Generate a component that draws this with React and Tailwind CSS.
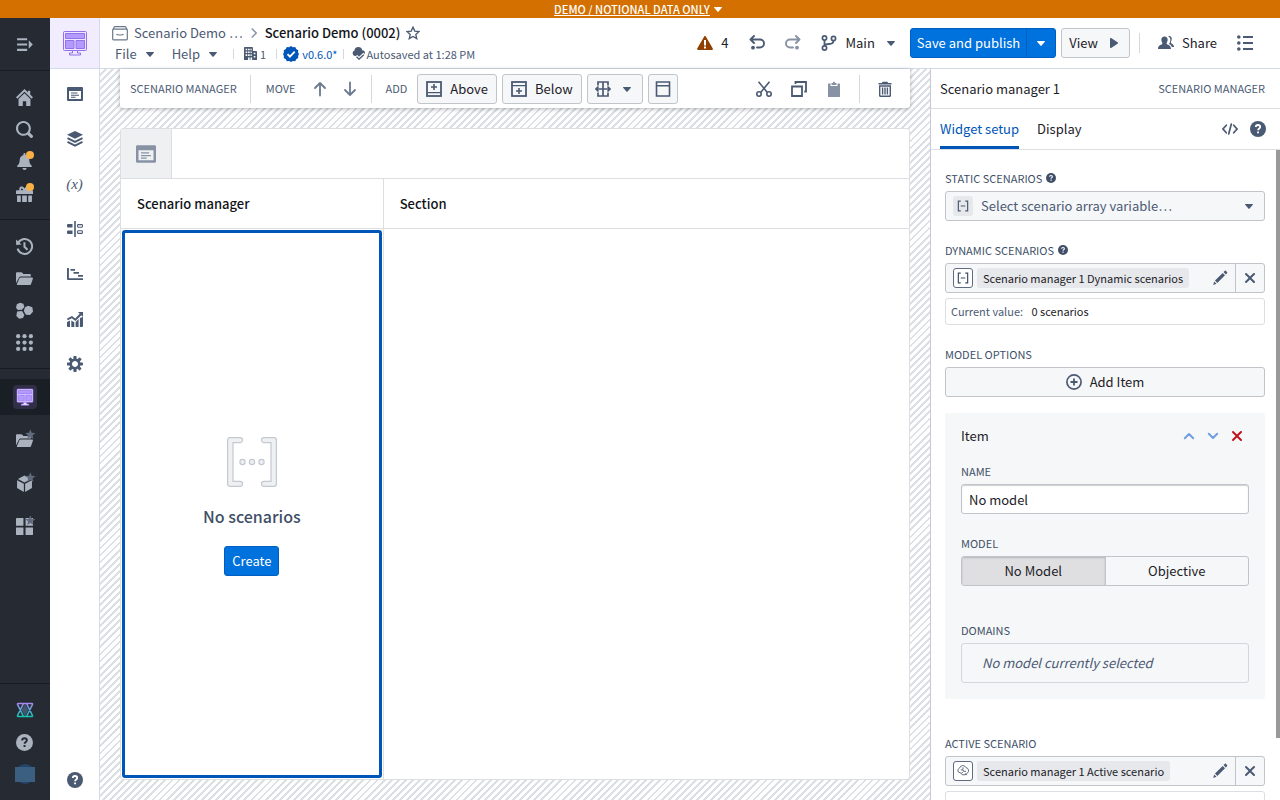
import React, { useState } from 'react';

const Icon = ({ size = 16, className = '', children }) => (
    <svg width={size} height={size} viewBox="0 0 16 16" fill="currentColor" className={`shrink-0 ${className}`} aria-hidden="true">
        {children}
    </svg>
);

const CaretDown = ({ className }) => (
    <Icon className={className}>
        <path d="M12 6.5c0-.28-.22-.5-.5-.5h-7a.495.495 0 00-.37.83l3.5 4c.09.1.22.17.37.17s.28-.07.37-.17l3.5-4c.08-.09.13-.2.13-.33z" />
    </Icon>
);

const Cross = ({ className }) => (
    <Icon className={className}>
        <path d="M9.41 8l3.29-3.29c.19-.18.3-.43.3-.71a1.003 1.003 0 00-1.71-.71L8 6.59l-3.29-3.3a1.003 1.003 0 00-1.42 1.42L6.59 8 3.3 11.29c-.19.18-.3.43-.3.71a1.003 1.003 0 001.71.71L8 9.41l3.29 3.29c.18.19.43.3.71.3a1.003 1.003 0 00.71-1.71L9.41 8z" />
    </Icon>
);

const Help = ({ size, className, mark = '#fff' }) => (
    <Icon size={size} className={className}>
        <circle cx="8" cy="8" r="8" />
        <path d="M5.8 6.1C5.8 4.8 6.7 4 8 4s2.2.8 2.2 1.9c0 1.5-2.1 1.7-2.1 3.3" fill="none" stroke={mark} strokeWidth="1.8" />
        <rect x="7.1" y="10.4" width="1.9" height="1.9" rx=".3" fill={mark} />
    </Icon>
);

const Menu = () => (
    <Icon size={17}>
        <path d="M1 2h9.5v2H1zM1 7h9.5v2H1zM1 12h9.5v2H1zM12 4l3.8 4L12 12z" />
    </Icon>
);

const Home = () => (
    <Icon size={17}>
        <path d="M8 0l3.2 3.1V1.6h2.2v3.6L16 7.8l-1.3 1.3L8 2.5 1.3 9.1 0 7.8z" />
        <path d="M8 4l5.6 5.5V16H9.6v-4.4H6.4V16h-4V9.5z" />
    </Icon>
);

const Search = () => (
    <Icon size={17}>
        <path d="M15.55 13.43l-2.67-2.68a6.94 6.94 0 001.11-3.76c0-3.87-3.13-7-7-7s-7 3.13-7 7 3.13 7 7 7c1.39 0 2.68-.42 3.76-1.11l2.68 2.67a1.498 1.498 0 102.12-2.12zm-8.56-1.44c-2.76 0-5-2.24-5-5s2.24-5 5-5 5 2.24 5 5-2.24 5-5 5z" />
    </Icon>
);

const Bell = () => (
    <Icon size={17}>
        <path d="M8 16a2 2 0 002-1.9H6A2 2 0 008 16zM13.4 10.3c-.7-1.2-.8-2.5-.9-4C12.3 4 11 2.3 9 1.800V1a1 1 0 00-2 0v.8C5 2.300 3.700 4 3.500 6.300c-.1 1.500-.2 2.800-.9 4-.6.9-1.600 1.500-1.600 2.200 0 .5.4.7.8.7h12.400c.4 0 .8-.2.8-.7 0-.7-1-1.300-1.600-2.200z" />
    </Icon>
);

const Gift = () => (
    <Icon size={17}>
        <path d="M1 5h2.500C2.300 3 4 .8 6 1.500c.9.300 1.500 1 2 1.900.5-.9 1.100-1.600 2-1.900 2-.7 3.700 1.500 2.500 3.500H15c.6 0 1 .4 1 1v2.500H0V6c0-.6.4-1 1-1zm4.200 0h1.600C6.400 4 5.800 3.200 5.200 3.300c-.7.200-.7 1.200 0 1.700z" />
        <path d="M1 9.800h3.500V16H1.800a.8.8 0 01-.8-.8zM5.800 9.800h4.400V16H5.800zM11.500 9.800H15v5.400c0 .4-.4.8-.8.8h-2.700z" />
    </Icon>
);

const History = () => (
    <Icon size={17}>
        <path d="M2.300 4.200A7 7 0 111.500 10" fill="none" stroke="currentColor" strokeWidth="1.900" />
        <path d="M0 1.500l.2 5 5-.3zM7 4h1.900v3.800l2.600 2.600-1.300 1.300L7 8.600z" />
    </Icon>
);

const FolderOpen = () => (
    <Icon size={17}>
        <path d="M0 3.200c0-.7.4-1.200 1.100-1.200h3.800c.4 0 .7.200 1 .5L7 3.700h5.800c.7 0 1.200.5 1.200 1.200V6H4.300c-.6 0-1 .3-1.300.8L0 12.500z" />
        <path d="M4.400 7H15c.8 0 1.100.6.9 1.200l-1.700 4.900c-.2.600-.6.900-1.200.9H1.500c-.6 0-.8-.4-.6-.9l2.300-5.300c.2-.5.6-.8 1.200-.8z" />
    </Icon>
);

const Hexagons = () => (
    <Icon size={17}>
        <path d="M3.700.8l3.200.8 1 3.100-2.300 2.500-3.900.4L0 5.500l.8-3.300zM11.400 3.500l4 1.400.6 4.200-2.800 3.200-3.900-.4-2-3.500 1.200-3.400zM1 9l4.700-.6 2.200 3.800-1.300 2.900-3.700.6L.3 13.200z" />
    </Icon>
);

const GridDots = () => (
    <Icon size={17}>
        {[2, 8, 14].map((y) => [2, 8, 14].map((x) => <circle key={`${x}-${y}`} cx={x} cy={y} r="2" />))}
    </Icon>
);

const StarBadge = () => (
    <path d="M13.500 -2.500L14.800 .7L18.300 1L15.600 3.200L16.400 6.500L13.500 4.700L10.600 6.500L11.400 3.200L8.700 1L12.200 .7z" fill="#5f6b7c" />
);

const FolderStar = () => (
    <Icon size={17} className="overflow-visible">
        <path d="M0 3.200c0-.7.4-1.200 1.100-1.200h3.800c.4 0 .7.200 1 .5L7 3.700h5.800c.7 0 1.200.5 1.200 1.200V6H4.300c-.6 0-1 .3-1.300.8L0 12.500z" />
        <path d="M4.400 7H15c.8 0 1.100.6.9 1.200l-1.700 4.900c-.2.600-.6.900-1.200.9H1.500c-.6 0-.8-.4-.6-.9l2.300-5.300c.2-.5.6-.8 1.200-.8z" />
        <StarBadge />
    </Icon>
);

const CubeStar = () => (
    <Icon size={17} className="overflow-visible">
        <path d="M8 .5l6.200 3.200L8 7 1.800 3.700zM1 5l6.400 3.300V16L1 12.300zM15 5L8.600 8.300V16L15 12.300z" />
        <StarBadge />
    </Icon>
);

const AppsStar = () => (
    <Icon size={17} className="overflow-visible">
        <path d="M.8 0H7v7.200H0V.8A.8.8 0 01.8 0zM9 0h7v7.200H9zM0 9h7v7H.8a.8.8 0 01-.8-.8zM9 9h7v6.200a.8.8 0 01-.8.8H9z" />
        <StarBadge />
    </Icon>
);

const WorkshopLogo = ({ size = 26 }) => (
    <svg width={size} height={size} viewBox="0 0 26 26" fill="none" stroke="#9470ea" aria-hidden="true">
        <rect x="1.500" y="1.500" width="23" height="19" rx="1" fill="#ede6ff" />
        <path d="M3.500 3.500h19v5h-19zM3.500 10.500h8.500v8H3.500zM14 10.500h8.500v8H14z" fill="#b49aff" />
        <path d="M10.500 20.500h5v2.500h3v2h-11v-2h3z" fill="#ede6ff" />
    </svg>
);

const WindowLines = ({ size, className }) => (
    <Icon size={size} className={className}>
        <path d="M15 1H1a1 1 0 00-1 1v12a1 1 0 001 1h14a1 1 0 001-1V2a1 1 0 00-1-1zm-1 12H2V5h12zM4 6.500h6.500v1H4zM4 8.700h8v1H4zM4 10.800h4.500v1H4z" fillRule="evenodd" />
    </Icon>
);

const Layers = () => (
    <Icon>
        <path d="M8 0l8 3.800-8 4-8-4z" />
        <path d="M.5 7.200L8 10.900l7.500-3.700M.5 10.900L8 14.600l7.500-3.700" fill="none" stroke="currentColor" strokeWidth="1.900" />
    </Icon>
);

const Alignment = () => (
    <Icon>
        <path d="M7.200 0h1.600v16H7.200zM1 3h4.500v3.500H1a1 1 0 01-1-1V4a1 1 0 011-1zM1 9.500h4.500V13H1a1 1 0 01-1-1v-1.500a1 1 0 011-1z" />
        <rect x="10.600" y="3.600" width="4.800" height="2.600" rx=".6" fill="none" stroke="currentColor" strokeWidth="1.100" />
        <rect x="10.600" y="9.800" width="4.800" height="2.600" rx=".6" fill="none" stroke="currentColor" strokeWidth="1.100" />
    </Icon>
);

const Gantt = () => (
    <Icon>
        <path d="M0 2h1.900v10.200H16V14H1a1 1 0 01-1-1zM3.500 3H8v1.700H3.500zM6.500 6H12v1.700H6.500zM11 9h5v1.700h-5z" />
    </Icon>
);

const Trend = () => (
    <Icon>
        <path d="M0 11l3-1.600V16H1a1 1 0 01-1-1zM4.300 9.500l3 1.800V16h-3zM8.600 11l3-3v8h-3zM12.900 7L16 6v9a1 1 0 01-1 1h-2.100zM11 1h5v5l-1.700-1.700-5.900 5.600-3.600-2.600-4.100 2L0 7.600 5 5l3.200 2.400 4.500-4.700z" />
    </Icon>
);

const Cog = () => (
    <Icon>
        <path d="M15.190 6.390h-1.850c-.11-.37-.27-.71-.45-1.040l1.360-1.360c.31-.31.31-.82 0-1.130l-1.130-1.130a.803.803 0 00-1.130 0l-1.360 1.360c-.33-.17-.67-.33-1.040-.44V.79c0-.44-.36-.8-.8-.8h-1.600c-.44 0-.8.36-.8.8v1.860c-.39.12-.75.28-1.100.47l-1.300-1.300c-.3-.3-.79-.3-1.090 0L1.820 2.910c-.3.3-.3.79 0 1.090l1.300 1.300c-.2.34-.36.7-.48 1.090H.79c-.44 0-.8.36-.8.8v1.600c0 .44.36.8.8.8h1.850c.11.37.27.71.45 1.040l-1.360 1.360c-.31.31-.31.82 0 1.130l1.130 1.130c.31.31.82.31 1.130 0l1.360-1.360c.33.18.67.33 1.040.44v1.860c0 .44.36.8.8.8h1.600c.44 0 .8-.36.8-.8v-1.860c.39-.12.75-.28 1.100-.47l1.300 1.300c.3.3.79.3 1.090 0l1.090-1.090c.3-.3.3-.79 0-1.090l-1.300-1.300c.19-.35.36-.71.48-1.100h1.850c.44 0 .8-.36.8-.8v-1.600a.816.816 0 00-.81-.79zm-7.200 4.600c-1.660 0-3-1.340-3-3s1.340-3 3-3 3 1.340 3 3-1.340 3-3 3z" />
    </Icon>
);

const Project = () => (
    <Icon className="text-[#6b778a]">
        <path d="M2.500 1.600h11M1.500 4.200h13a.8.8 0 01.8.8v9a.8.8 0 01-.8.8h-13A.8.8 0 01.7 14V5a.8.8 0 01.8-.8zM4.500 9c.5 1.300 6.500 1.300 7 0M1 4.500l1.500-3M15 4.500l-1.500-3" fill="none" stroke="currentColor" strokeWidth="1.200" />
    </Icon>
);

const Star = () => (
    <Icon size={14}>
        <path d="M8 1.300l2 4.500 4.900.5-3.700 3.300 1.100 4.900L8 12l-4.300 2.500 1.100-4.900L1.100 6.300 6 5.800z" fill="none" stroke="currentColor" strokeWidth="1.500" />
    </Icon>
);

const Building = () => (
    <Icon size={13}>
        <path d="M0 1a1 1 0 011-1h9a1 1 0 011 1v4h4a1 1 0 011 1v10h-6v-3H8v3H7v-3H5v3H0zm2 1v2h2V2zm3 0v2h2V2zm3 0v2h1.500V2zM2 5.500v2h2v-2zm3 0v2h2v-2zm3 0v2h1.500v-2zM2 9v2h2V9zm3 0v2h2V9zm3 0v2h1.500V9zm4-2v2h2V7zm0 4v2h2v-2z" fillRule="evenodd" />
    </Icon>
);

const Verified = () => (
    <Icon className="text-[#0055b8]">
        <path d="M8 0l1.900 1.200 2.300-.1 1 2 2 1.100-.1 2.300L16 8l-.9 1.900.1 2.200-2 1.100-1 2-2.300-.1L8 16l-1.900-.9-2.300.1-1-2-2-1.100.1-2.200L0 8l.9-1.500-.1-2.300 2-1.100 1-2 2.300.1z" />
        <path d="M4.500 8.200l2.400 2.400 4.800-4.900" fill="none" stroke="#fff" strokeWidth="1.900" />
    </Icon>
);

const CloudTick = () => (
    <Icon size={13}>
        <path d="M3.600 11A3.500 3.500 0 013 4.300 4.800 4.800 0 0112.500 4 3.600 3.600 0 0116 7.600l-.3 1-1.700-1.500-5.300 5L6.500 9.800 4.500 11z" />
        <path d="M5.500 12l3.200 3 5.800-5.500" fill="none" stroke="currentColor" strokeWidth="1.600" />
    </Icon>
);

const Warning = () => (
    <Icon className="text-[#8f4000]">
        <path d="M15.800 13.500l-7-12.100a.95.95 0 00-1.600 0L.2 13.500c-.4.7 0 1.500.8 1.500h14c.8 0 1.200-.8.8-1.500zM7 5h2v5.500H7zm0 6.500h2v2H7z" fillRule="evenodd" />
    </Icon>
);

const Undo = () => (
    <Icon>
        <path d="M1.500 4.500H11a4 4 0 010 8H8M5 1L1.500 4.500 5 8" fill="none" stroke="currentColor" strokeWidth="1.900" strokeLinecap="round" strokeLinejoin="round" />
        <circle cx="4" cy="12.700" r="1.900" />
    </Icon>
);

const Branch = () => (
    <Icon>
        <path d="M3.500 5v6M12.500 5.500c0 3-2 3.500-4.500 3.500-2.400 0-4.200.6-4.500 2" fill="none" stroke="currentColor" strokeWidth="1.800" />
        <circle cx="3.500" cy="3" r="2.100" fill="none" stroke="currentColor" strokeWidth="1.700" />
        <circle cx="12.500" cy="3.500" r="2.100" fill="none" stroke="currentColor" strokeWidth="1.700" />
        <circle cx="3.500" cy="13" r="2.100" fill="none" stroke="currentColor" strokeWidth="1.700" />
    </Icon>
);

const Play = () => (
    <Icon>
        <path d="M12 8c0-.35-.19-.64-.46-.82l.01-.02-6-4-.01.02A.969.969 0 005 3c-.55 0-1 .45-1 1v8c0 .55.45 1 1 1 .21 0 .39-.08.54-.18l.01.02 6-4-.01-.02c.27-.18.46-.47.46-.82z" />
    </Icon>
);

const People = () => (
    <Icon>
        <path d="M10 1.200c2.200-.7 3.900.6 3.700 2.900 0 .8-.2 1.500-.6 2.100-.4.8-.3 1.800.4 2.200 1.200.7 2.500 1.400 2.500 3.600h-2.200c-.5-1.600-1.600-2.300-2.800-2.900.9-1.100 1.500-3.200 1.300-5-.1-1.300-.9-2.400-2.300-2.900z" />
        <path d="M6.500 1.400c2 0 3.200 1.300 3.200 3.200 0 1-.3 2-.8 2.800-.5.9-.3 1.700.6 2.100 1.800.8 3.400 1.400 3.500 4.500H0c.1-3.100 1.700-3.700 3.500-4.500.9-.4 1.100-1.200.6-2.100-.5-.8-.8-1.800-.8-2.800 0-1.900 1.200-3.200 3.200-3.200z" />
    </Icon>
);

const List = () => (
    <Icon>
        <circle cx="1.800" cy="2" r="1.800" />
        <circle cx="1.800" cy="8" r="1.800" />
        <circle cx="1.800" cy="14" r="1.800" />
        <path d="M6 1.100h10v1.800H6zM6 7.100h10v1.800H6zM6 13.100h10v1.800H6z" />
    </Icon>
);

const Arrow = ({ down }) => (
    <Icon className={down ? 'rotate-180' : ''}>
        <path d="M8 14.500V2M3 7l5-5 5 5" fill="none" stroke="currentColor" strokeWidth="1.800" strokeLinecap="round" strokeLinejoin="round" />
    </Icon>
);

const AddRow = ({ below }) => (
    <Icon>
        <rect x="1" y="1" width="14" height="14" fill="none" stroke="currentColor" strokeWidth="1.800" />
        {below ? <path d="M1 4h14v1.300H1zM7.200 7h1.600v2.200H11v1.600H8.800V13H7.200v-2.200H5V9.200h2.200z" /> : <path d="M1 11h14v1.300H1zM7.200 3h1.600v2.200H11v1.600H8.800V9H7.200V6.800H5V5.200h2.200z" />}
    </Icon>
);

const SplitColumns = () => (
    <Icon>
        <path d="M3 4.500V1h10v3.500M3 11.500V15h10v-3.500M8 1v14M1 8h14M3.500 5.500L1 8l2.500 2.500M12.500 5.500L15 8l-2.500 2.500" fill="none" stroke="currentColor" strokeWidth="1.700" />
    </Icon>
);

const Panel = () => (
    <Icon>
        <path d="M1.500 1h13v14h-13zM1.500 4.700h13" fill="none" stroke="currentColor" strokeWidth="1.600" />
    </Icon>
);

const Cut = () => (
    <Icon>
        <path d="M2.500.8l8.700 10.400M13.500.8L4.800 11.200" fill="none" stroke="currentColor" strokeWidth="1.600" />
        <circle cx="3" cy="13" r="2.200" fill="none" stroke="currentColor" strokeWidth="1.600" />
        <circle cx="13" cy="13" r="2.200" fill="none" stroke="currentColor" strokeWidth="1.600" />
    </Icon>
);

const Duplicate = () => (
    <Icon>
        <path d="M1 5.500h10V15H1zM4.500 3V1H15v9.500h-1.700" fill="none" stroke="currentColor" strokeWidth="1.800" />
    </Icon>
);

const Clipboard = () => (
    <Icon className="text-[#8792a5]">
        <path d="M2.500 2.500h2V5h7V2.500h2c.3 0 .5.2.5.5v12.500c0 .3-.2.5-.5.5h-11a.5.5 0 01-.5-.5V3c0-.3.2-.5.5-.5zM5.500 2h1.300a1.200 1.200 0 012.400 0h1.300v2h-5z" />
    </Icon>
);

const Trash = () => (
    <Icon>
        <path d="M1.500 2H5c0-.6.5-1.200 1.200-1.200h3.600c.7 0 1.200.6 1.200 1.200h3.500v1.500h-13z" />
        <path d="M2.700 5h10.600v9.500a.8.8 0 01-.8.8h-9a.8.8 0 01-.8-.8zM5.600 6.500v7M8 6.500v7M10.400 6.500v7" fill="none" stroke="currentColor" strokeWidth="1.400" />
    </Icon>
);

const Code = () => (
    <Icon>
        <path d="M4.300 4.200L1 8l3.300 3.800M11.700 4.200L15 8l-3.300 3.800M9.300 3L6.700 13" fill="none" stroke="currentColor" strokeWidth="1.700" strokeLinecap="round" />
    </Icon>
);

const Edit = () => (
    <Icon>
        <path d="M1.200 14.900l1-3.500 2.300 2.300zM3 10.600l7.700-7.700 2.300 2.300-7.700 7.700zM11.500 2.100l1.200-1.200c.5-.5 1-.3 1.300 0l1 1c.4.4.4.9 0 1.300l-1.200 1.200z" />
    </Icon>
);

const AddCircle = () => (
    <Icon>
        <circle cx="8" cy="8" r="7.100" fill="none" stroke="currentColor" strokeWidth="1.700" />
        <path d="M7.100 4.500h1.800v2.600h2.600v1.800H8.900v2.600H7.100V8.900H4.500V7.100h2.600z" />
    </Icon>
);

const Chevron = ({ down }) => (
    <Icon className={down ? 'rotate-180' : ''}>
        <path d="M3.800 10.200L8 6l4.200 4.200" fill="none" stroke="currentColor" strokeWidth="2" strokeLinecap="round" strokeLinejoin="round" />
    </Icon>
);

const ArrayIcon = () => (
    <Icon size={12}>
        <path d="M5 1.500H1.800v13H5M11 1.500h3.200v13H11M5 8h6" fill="none" stroke="currentColor" strokeWidth="1.600" />
    </Icon>
);

const ScenarioIcon = () => (
    <Icon size={12}>
        <path d="M2 9.500A3.500 3.500 0 013.500 4 4.500 4.500 0 0112 3.500a4 4 0 012 7L11.500 13H7l-2-2.500zM5 6.500h3l1 2h3M8 3v3M6 11l2-2M11 11l2 2.500" fill="none" stroke="currentColor" strokeWidth="1.100" />
    </Icon>
);

const EmptyArray = () => (
    <svg width="50" height="50" viewBox="1 1 50 50" fill="#eff0f2" stroke="#c3c8d1" strokeWidth="1.200" aria-hidden="true">
        <path d="M4 1.600h10a2.500 2.500 0 010 5H7v38.800h7a2.500 2.500 0 010 5H4A2.400 2.400 0 011.600 48V4A2.400 2.400 0 014 1.600z" />
        <path d="M48 1.600H38a2.500 2.500 0 000 5h7v38.800h-7a2.500 2.500 0 000 5h10a2.400 2.400 0 002.400-2.400V4A2.400 2.400 0 0048 1.600z" />
        <circle cx="16.500" cy="26" r="2.600" />
        <circle cx="26" cy="26" r="2.600" />
        <circle cx="35.500" cy="26" r="2.600" />
    </svg>
);

const AssistLogo = () => (
    <svg width="18" height="16" viewBox="0 0 18 16" fill="none" strokeWidth="1.500" aria-hidden="true">
        <defs>
            <linearGradient id="assist" x1="0" y1="0" x2="0" y2="1">
                <stop offset="0" stopColor="#a68af0" />
                <stop offset="1" stopColor="#14c5b5" />
            </linearGradient>
        </defs>
        <path d="M9 2l3.500 6L9 14 5.500 8z" fill="#3f5870" />
        <path d="M2.200 1.500h13.600c.8 0 1 .6.6 1.200L10.500 14.500M15.800 14.500H2.200c-.8 0-1-.6-.6-1.200L7.500 1.500M1.600 2.700l5.900 11.800M10.500 1.500l5.900 11.800c.4.6.2 1.200-.6 1.200M1.600 2.700c-.4-.6-.2-1.200.6-1.200" stroke="url(#assist)" />
    </svg>
);

const NavButton = ({ label, dot, active, tall, children }) => (
    <button
        type="button"
        aria-label={label}
        className={`relative flex w-full items-center justify-center pr-px ${tall ? 'h-9' : 'h-8'} ${active ? 'bg-[#1a1e25]' : ''}`}
    >
        {children}
        {dot && <span className="absolute top-[6px] right-4 size-2 rounded-full bg-[#fbb046]"></span>}
    </button>
);

const Divider = ({ className = 'h-4' }) => <span className={`w-px bg-[#d3d8de] ${className}`}></span>;

const FieldLabel = ({ htmlFor, help, children }) => (
    <label htmlFor={htmlFor} className="mb-[3px] flex h-5 items-center gap-1 text-[11px] leading-5 text-[#404f67]">
        {children}
        {help && <Help size={10} />}
    </label>
);

const outlineButton = 'flex h-[30px] items-center rounded-[3px] border border-[#c1c4c9] bg-[#f6f7f9]';

const VariableField = ({ id, icon, name }) => (
    <div className="flex h-[30px] rounded-[3px] border border-[#c1c4c9] bg-[#f6f7f9]">
        <button type="button" id={id} className="flex min-w-0 flex-1 items-center gap-1 pl-[7px]">
            <span className="flex size-5 items-center justify-center rounded-[3px] border border-[#5f6b82] bg-white text-[#404f67]">{icon}</span>
            <span className="truncate rounded-[3px] bg-[#e6e8eb] px-[6px] text-[11px] leading-5 text-[#1c2127]">{name}</span>
        </button>
        <button type="button" aria-label="Edit variable" className="flex w-[30px] items-center justify-center">
            <Edit />
        </button>
        <button type="button" aria-label="Clear variable" className="flex w-[29px] items-center justify-center border-l border-[#c1c4c9]">
            <Cross />
        </button>
    </div>
);

const App = () => {
    const [modelName, setModelName] = useState('No model');

    return (
        <div className="flex h-screen flex-col overflow-hidden bg-white font-['Noto_Sans_CJK_SC',sans-serif] text-[13px] text-[#1c2127]">
            {/* Classification banner */}
            <div className="flex h-[18px] shrink-0 items-center justify-center bg-[#d37000] text-white">
                <button type="button" className="flex items-center text-[11px] leading-[18px] font-medium">
                    <span className="underline">DEMO / NOTIONAL DATA ONLY</span>
                    <CaretDown />
                </button>
            </div>

            <div className="flex min-h-0 flex-1">
                {/* Platform navigation */}
                <nav className="flex w-[50px] shrink-0 flex-col bg-[#252a33] text-[#abb3bf]">
                    <div className="flex h-[53px] flex-col justify-center border-b border-[#181b21]">
                        <NavButton label="Expand navigation"><Menu /></NavButton>
                    </div>
                    <div className="border-b border-[#181b21] py-[10px]">
                        <NavButton label="Home"><Home /></NavButton>
                        <NavButton label="Search"><Search /></NavButton>
                        <NavButton label="Notifications" dot><Bell /></NavButton>
                        <NavButton label="What's new" dot><Gift /></NavButton>
                    </div>
                    <div className="border-b border-[#181b21] py-[10px]">
                        <NavButton label="Recent"><History /></NavButton>
                        <NavButton label="Files"><FolderOpen /></NavButton>
                        <NavButton label="Ontology"><Hexagons /></NavButton>
                        <NavButton label="Applications"><GridDots /></NavButton>
                    </div>
                    <div className="flex flex-col gap-[7px] py-[10px]">
                        <NavButton label="Workshop" active tall>
                            <span className="flex size-6 items-center justify-center rounded bg-[#312e47]"><WorkshopLogo size={18} /></span>
                        </NavButton>
                        <NavButton label="Favorite files" tall><FolderStar /></NavButton>
                        <NavButton label="Favorite objects" tall><CubeStar /></NavButton>
                        <NavButton label="Favorite applications" tall><AppsStar /></NavButton>
                    </div>
                    <div className="mt-auto border-t border-[#181b21] py-[10px]">
                        <NavButton label="Assist"><AssistLogo /></NavButton>
                        <NavButton label="Support"><Help size={17} mark="#252a33" /></NavButton>
                        <NavButton label="Account">
                            <span className="flex size-5 items-center justify-center rounded-full bg-[#24446a]">
                                <span className="h-[15px] w-5 bg-[#3a5f80]"></span>
                            </span>
                        </NavButton>
                    </div>
                </nav>

                <div className="flex min-w-0 flex-1 flex-col">
                    {/* Header */}
                    <header className="flex h-[51px] shrink-0 items-center border-b border-[#d3dae8] text-[#4b5a73]">
                        <a href="#workshop" aria-label="Workshop" className="flex h-full w-[50px] items-center justify-center border-r border-[#d3dae8] bg-[#f1edfe]">
                            <WorkshopLogo />
                        </a>
                        <div className="pl-3">
                            <div className="flex h-5 items-center gap-[6px]">
                                <Project />
                                <a href="#project" className="text-[13px] leading-5">Scenario Demo …</a>
                                <span className="flex w-[10px] items-center justify-center"><Icon size={12}><path d="M5 2l6 6-6 6" fill="none" stroke="#8792a5" strokeWidth="2" /></Icon></span>
                                <h1 className="text-[13px] leading-5 font-medium text-[#111418]">Scenario Demo (0002)</h1>
                                <button type="button" aria-label="Add to favorites"><Star /></button>
                            </div>
                            <div className="mt-px flex h-5 items-center text-[11px] leading-5">
                                <button type="button" className="flex items-center gap-[5px] pl-[3px] text-[13px]">File <CaretDown /></button>
                                <button type="button" className="ml-[14px] flex items-center gap-[5px] text-[13px]">Help <CaretDown /></button>
                                <Divider className="ml-3 mr-[10px] h-[10px]" />
                                <button type="button" className="flex items-center gap-[3px]"><Building /> 1</button>
                                <Divider className="ml-[10px] mr-[6px] h-[10px]" />
                                <a href="#version" className="flex items-center gap-[3px] text-[#0055b8]"><Verified /> v0.6.0*</a>
                                <Divider className="ml-[5px] mr-2 h-[10px]" />
                                <span className="flex items-center gap-[2px]"><CloudTick /> Autosaved at 1:28 PM</span>
                            </div>
                        </div>

                        <div className="ml-auto flex items-center pr-[27px] text-[13px]">
                            <button type="button" className="flex items-center gap-2 text-[#1c2127]"><Warning /> 4</button>
                            <button type="button" aria-label="Undo" className="ml-[21px]"><Undo /></button>
                            <button type="button" aria-label="Redo" className="ml-5 -scale-x-100 text-[#8792a5]"><Undo /></button>
                            <button type="button" className="ml-5 flex items-center gap-2">
                                <Branch />
                                <span className="text-[#1c2127]">Main</span>
                                <CaretDown />
                            </button>
                            <div className="ml-[11px] flex h-[30px] overflow-hidden rounded-[3px] border border-[#005fc0] bg-[#0072dd] text-white">
                                <button type="button" className="px-[6px]">Save and publish</button>
                                <button type="button" aria-label="More publish options" className="flex w-[29px] items-center justify-center border-l border-[#005fc0]"><CaretDown /></button>
                            </div>
                            <button type="button" className={`ml-[5px] gap-2 px-[7px] ${outlineButton}`}>
                                <span className="text-[#1c2127]">View</span>
                                <Play />
                            </button>
                            <Divider className="ml-[9px] h-5" />
                            <button type="button" className="ml-[18px] flex items-center gap-2">
                                <People />
                                <span className="text-[#1c2127]">Share</span>
                            </button>
                            <button type="button" aria-label="Outline" className="ml-5"><List /></button>
                        </div>
                    </header>

                    <div className="flex min-h-0 flex-1">
                        {/* Editor tools */}
                        <nav className="flex w-[50px] shrink-0 flex-col items-center gap-[29px] border-r border-[#d3dae8] pt-[17px] pb-3 text-[#4b5a73]">
                            <button type="button" aria-label="Overview"><WindowLines /></button>
                            <button type="button" aria-label="Layers"><Layers /></button>
                            <button type="button" className="h-4 pb-1 font-['Liberation_Serif',serif] text-[15px] leading-4 italic">(x)</button>
                            <button type="button" aria-label="Layout"><Alignment /></button>
                            <button type="button" aria-label="Timeline"><Gantt /></button>
                            <button type="button" aria-label="Metrics"><Trend /></button>
                            <button type="button" aria-label="Settings"><Cog /></button>
                            <button type="button" aria-label="Help" className="mt-auto"><Help /></button>
                        </nav>

                        {/* Canvas */}
                        <main className="flex min-w-0 flex-1 flex-col bg-[repeating-linear-gradient(135deg,#fff_0_3px,#dcdfe4_3px_5px)] px-5 pb-5">
                            <div className="flex h-[39px] shrink-0 items-center rounded-b-[3px] bg-white px-[10px] text-[11px] text-[#4b5a73] shadow-[0_1px_4px_rgba(17,20,24,0.3)]">
                                <span>SCENARIO MANAGER</span>
                                <Divider className="mr-[15px] ml-[13px] h-7" />
                                <span>MOVE</span>
                                <button type="button" aria-label="Move up" className="ml-4 text-[#6b7890]"><Arrow /></button>
                                <button type="button" aria-label="Move down" className="ml-[14px] text-[#6b7890]"><Arrow down /></button>
                                <Divider className="mr-[14px] ml-[13px] h-7" />
                                <span className="mr-[10px]">ADD</span>
                                <div className="flex gap-[5px] text-[13px]">
                                    <button type="button" className={`gap-2 px-2 ${outlineButton}`}><AddRow /> <span className="text-[#1c2127]">Above</span></button>
                                    <button type="button" className={`gap-2 px-2 ${outlineButton}`}><AddRow below /> <span className="text-[#1c2127]">Below</span></button>
                                    <button type="button" aria-label="Split section" className={`gap-2 px-[7px] ${outlineButton}`}><SplitColumns /> <CaretDown /></button>
                                    <button type="button" aria-label="Add panel" className={`px-[6px] ${outlineButton}`}><Panel /></button>
                                </div>
                                <div className="ml-auto flex items-center gap-[19px]">
                                    <button type="button" aria-label="Cut"><Cut /></button>
                                    <button type="button" aria-label="Duplicate"><Duplicate /></button>
                                    <button type="button" aria-label="Paste"><Clipboard /></button>
                                </div>
                                <Divider className="mx-[17px] h-7" />
                                <button type="button" aria-label="Delete" className="mr-[7px]"><Trash /></button>
                            </div>

                            <section className="mt-5 flex min-h-0 flex-1 flex-col overflow-hidden rounded-[3px] border border-[#dcdee2] bg-white">
                                <div className="flex h-[50px] shrink-0 border-b border-[#dcdee2]">
                                    <div className="flex w-[51px] items-center justify-center border-r border-[#dcdee2] bg-[#eef0f2] text-[#8792a5]">
                                        <WindowLines size={20} />
                                    </div>
                                </div>
                                <div className="flex min-h-0 flex-1">
                                    <div className="flex w-1/3 flex-col border-r border-[#dcdee2]">
                                        <h2 className="h-[50px] shrink-0 border-b border-[#dcdee2] px-4 text-[13px] leading-[50px] font-medium text-[#111418]">Scenario manager</h2>
                                        <div className="m-px flex flex-1 flex-col items-center justify-center rounded-[3px] border-3 border-[#0055b8] pt-1">
                                            <EmptyArray />
                                            <p className="mt-[17px] text-[16px] leading-6 font-medium text-[#404f67]">No scenarios</p>
                                            <button type="button" className="mt-[18px] h-[30px] rounded-[3px] border border-[#005fc0] bg-[#0072dd] px-[7px] text-white">Create</button>
                                        </div>
                                    </div>
                                    <div className="flex flex-1 flex-col">
                                        <h2 className="h-[50px] shrink-0 border-b border-[#dcdee2] px-4 text-[13px] leading-[50px] font-medium text-[#111418]">Section</h2>
                                    </div>
                                </div>
                            </section>
                        </main>

                        {/* Widget configuration */}
                        <aside className="z-10 flex w-[350px] shrink-0 flex-col border-l border-[#c5cad3] bg-white">
                            <div className="flex h-10 shrink-0 items-center justify-between border-b border-[#dcdee2] pr-[15px] pl-[9px]">
                                <h2>Scenario manager 1</h2>
                                <span className="text-[11px] text-[#4b5a73]">SCENARIO MANAGER</span>
                            </div>
                            <div className="flex h-[41px] shrink-0 items-center border-b border-[#dcdee2] pr-[14px] pl-[9px]">
                                <div role="tablist" className="flex h-full gap-[18px]">
                                    <button type="button" role="tab" aria-selected="true" className="h-full border-b-3 border-[#0055b8] pt-[3px] text-[#0055b8]">Widget setup</button>
                                    <button type="button" role="tab" aria-selected="false" className="h-full">Display</button>
                                </div>
                                <div className="ml-auto flex items-center gap-3 text-[#4b5a73]">
                                    <button type="button" aria-label="View as code"><Code /></button>
                                    <button type="button" aria-label="Help"><Help /></button>
                                </div>
                            </div>

                            <div className="relative min-h-0 flex-1 overflow-hidden pt-[18px] pr-[15px] pl-[14px] text-[#4b5a73]">
                                <span className="absolute top-0 right-0 h-[588px] w-1 bg-[#999]"></span>
                                <FieldLabel htmlFor="static-scenarios" help>STATIC SCENARIOS</FieldLabel>
                                <div className="relative flex items-center">
                                    <span className="absolute left-2 flex size-5 items-center justify-center rounded-[3px] bg-[#e6e8eb]"><ArrayIcon /></span>
                                    <select id="static-scenarios" className="h-[30px] w-full appearance-none rounded-[3px] border border-[#c1c4c9] bg-[#f6f7f9] pl-[35px] text-[13px]">
                                        <option>Select scenario array variable…</option>
                                    </select>
                                    <CaretDown className="pointer-events-none absolute right-2" />
                                </div>

                                <div className="mt-[19px]">
                                    <FieldLabel htmlFor="dynamic-scenarios" help>DYNAMIC SCENARIOS</FieldLabel>
                                    <VariableField id="dynamic-scenarios" icon={<ArrayIcon />} name="Scenario manager 1 Dynamic scenarios" />
                                    <p className="mt-[5px] h-[27px] rounded-[3px] border border-[#dcdee2] px-[5px] text-[11px] leading-[25px]">
                                        Current value: <span className="ml-[6px] text-[#1c2127]">0 scenarios</span>
                                    </p>
                                </div>

                                <div className="mt-[19px]">
                                    <FieldLabel htmlFor="add-item">MODEL OPTIONS</FieldLabel>
                                    <button type="button" id="add-item" className={`w-full justify-center gap-2 ${outlineButton}`}>
                                        <AddCircle />
                                        <span className="text-[#1c2127]">Add Item</span>
                                    </button>
                                </div>

                                <div className="mt-4 rounded-[2px] bg-[#f6f7f9] px-4 pt-[13px] pb-4">
                                    <div className="flex h-5 items-center">
                                        <h3 className="text-[#1c2127]">Item</h3>
                                        <div className="ml-auto flex items-center gap-2 pr-1">
                                            <button type="button" aria-label="Move item up" className="text-[#6f9fe0]"><Chevron /></button>
                                            <button type="button" aria-label="Move item down" className="text-[#6f9fe0]"><Chevron down /></button>
                                            <button type="button" aria-label="Remove item" className="text-[#c0141c]"><Cross /></button>
                                        </div>
                                    </div>
                                    <div className="mt-[15px]">
                                        <FieldLabel htmlFor="model-name">NAME</FieldLabel>
                                        <input
                                            id="model-name"
                                            type="text"
                                            value={modelName}
                                            onChange={(e) => setModelName(e.target.value)}
                                            className="h-[30px] w-full rounded-[3px] border border-[#c1c4c9] bg-white px-[7px] text-[#1c2127] shadow-[inset_0_1px_1px_rgba(17,20,24,0.2)]"
                                        />
                                    </div>
                                    <div className="mt-[19px]">
                                        <FieldLabel htmlFor="model-none">MODEL</FieldLabel>
                                        <div className="flex h-[30px] overflow-hidden rounded-[3px] border border-[#c1c4c9] text-[#1c2127]">
                                            <button type="button" id="model-none" aria-pressed="true" className="flex-1 border-r border-[#c1c4c9] bg-[#dfdfe1] shadow-[inset_0_1px_2px_rgba(17,20,24,0.2)]">No Model</button>
                                            <button type="button" aria-pressed="false" className="flex-1">Objective</button>
                                        </div>
                                    </div>
                                    <div className="mt-[34px]">
                                        <FieldLabel>DOMAINS</FieldLabel>
                                        <p className="h-10 rounded-[3px] border border-[#d3d6da] px-5 leading-[38px] italic">No model currently selected</p>
                                    </div>
                                </div>

                                <div className="mt-[34px]">
                                    <FieldLabel htmlFor="active-scenario">ACTIVE SCENARIO</FieldLabel>
                                    <VariableField id="active-scenario" icon={<ScenarioIcon />} name="Scenario manager 1 Active scenario" />
                                    <p className="mt-[5px] h-[27px] rounded-[3px] border border-[#dcdee2]"></p>
                                </div>
                            </div>
                        </aside>
                    </div>
                </div>
            </div>
        </div>
    );
};

export default App;
